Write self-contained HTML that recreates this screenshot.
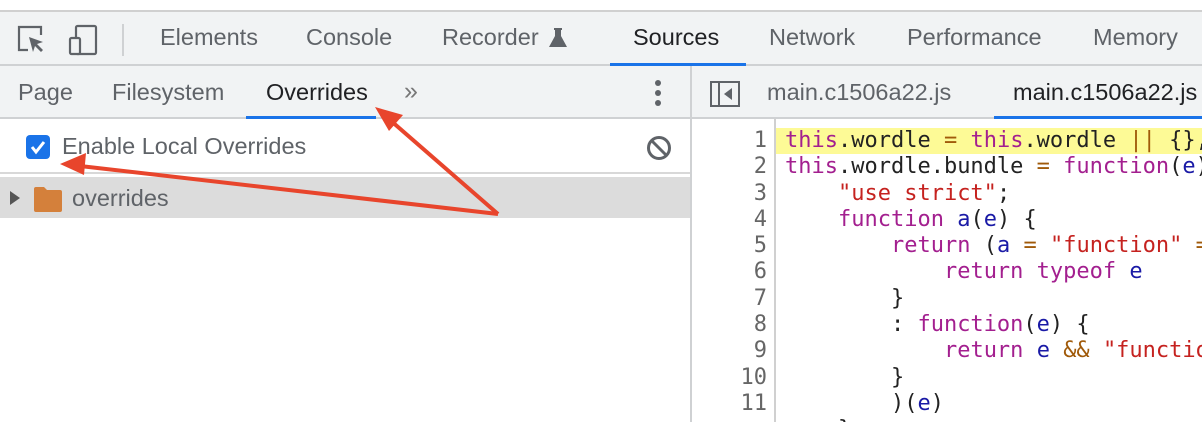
<!DOCTYPE html>
<html><head><style>
*{margin:0;padding:0;box-sizing:border-box}
html,body{width:1202px;height:422px;overflow:hidden}
body{background:#fff;font-family:"Liberation Sans",sans-serif;position:relative}
.a{position:absolute}
.t{position:absolute;font-size:23.5px;color:#5f6368;white-space:nowrap}
.code{position:absolute;left:785px;top:128px;height:294px;overflow:hidden;font-family:"DejaVu Sans Mono",monospace;font-size:22px;line-height:26.3px;white-space:pre;color:#222}
.ln{position:absolute;left:700px;width:67px;top:128px;text-align:right;font-family:"DejaVu Sans Mono",monospace;font-size:22px;line-height:26.3px;color:#666;white-space:pre}
.k{color:#a31f8f}.s{color:#c5221f}.v{color:#1a1aa6}.o{color:#a05a0a}
</style></head><body>
<div class="a" style="left:0;top:10px;width:1202px;height:2px;background:#d0d0d0"></div>
<div class="a" style="left:0;top:12px;width:1202px;height:106px;background:#f1f3f4"></div>
<div class="a" style="left:0;top:64px;width:1202px;height:2px;background:#cfd1d3"></div>
<div class="a" style="left:0;top:117px;width:1202px;height:2px;background:#cfd1d3"></div>
<div class="a" style="left:690px;top:66px;width:2px;height:356px;background:#cfd1d3"></div>
<svg class="a" style="left:16px;top:24px" width="32" height="32" viewBox="0 0 32 32"><path d="M12 26H3V3h22v8" fill="none" stroke="#5f6368" stroke-width="2.2"/><path d="M13 13l14 5-6 2 6 6-2 2-6-6-2 6z" fill="#5f6368"/></svg>
<svg class="a" style="left:68px;top:24px" width="34" height="32" viewBox="0 0 34 32"><rect x="8" y="2" width="20" height="28" rx="1.5" fill="none" stroke="#5f6368" stroke-width="2.2"/><rect x="2" y="14" width="10" height="16" rx="1.5" fill="#f1f3f4" stroke="#5f6368" stroke-width="2.2"/></svg>
<div class="a" style="left:122px;top:24px;width:2px;height:32px;background:#cfd1d3"></div>
<div class="t" style="left:160px;top:24px">Elements</div>
<div class="t" style="left:306px;top:24px">Console</div>
<div class="t" style="left:442px;top:24px">Recorder</div>
<svg class="a" style="left:548px;top:27px" width="20" height="22" viewBox="0 0 20 22"><path d="M6 1h8v2h-1v6l6 11H1L7 9V3H6z" fill="#5f6368"/></svg>
<div class="t" style="left:633px;top:24px;color:#202124">Sources</div>
<div class="a" style="left:610px;top:63px;width:136px;height:3px;background:#1a73e8"></div>
<div class="t" style="left:769px;top:24px">Network</div>
<div class="t" style="left:907px;top:24px">Performance</div>
<div class="t" style="left:1093px;top:24px">Memory</div>
<div class="t" style="left:18px;top:79px">Page</div>
<div class="t" style="left:112px;top:79px">Filesystem</div>
<div class="t" style="left:266px;top:79px;color:#202124">Overrides</div>
<div class="t" style="left:404px;top:77px;font-size:25px;color:#777">»</div>
<div class="a" style="left:246px;top:116px;width:130px;height:3px;background:#1a73e8"></div>
<div class="a" style="left:655px;top:80px;width:6px;height:6px;border-radius:3px;background:#5f6368;box-shadow:0 10px 0 #5f6368,0 20px 0 #5f6368"></div>
<svg class="a" style="left:710px;top:81px" width="30" height="26" viewBox="0 0 30 26"><rect x="1" y="1" width="28" height="24" fill="none" stroke="#5f6368" stroke-width="2"/><path d="M9 1v24" stroke="#5f6368" stroke-width="2"/><path d="M22 7v12l-8-6z" fill="#5f6368"/></svg>
<div class="t" style="left:767px;top:79px">main.c1506a22.js</div>
<div class="t" style="left:1013px;top:79px;color:#202124">main.c1506a22.js</div>
<div class="a" style="left:994px;top:116px;width:208px;height:3px;background:#1a73e8"></div>
<div class="a" style="left:26px;top:135px;width:24px;height:24px;border-radius:4px;background:#1a73e8"></div>
<svg class="a" style="left:26px;top:135px" width="24" height="24" viewBox="0 0 24 24"><path d="M6 12l4 5 8-10" fill="none" stroke="#fff" stroke-width="3"/></svg>
<div class="t" style="left:62px;top:133px">Enable Local Overrides</div>
<svg class="a" style="left:645px;top:134px" width="28" height="28" viewBox="0 0 28 28"><circle cx="14" cy="14" r="10.5" fill="none" stroke="#5f6368" stroke-width="3"/><path d="M7 7l14 14" stroke="#5f6368" stroke-width="3"/></svg>
<div class="a" style="left:0;top:172px;width:690px;height:2px;background:#d8d8d8"></div>
<div class="a" style="left:0;top:177px;width:690px;height:41px;background:#dcdcdc"></div>
<svg class="a" style="left:9px;top:190px" width="12" height="16"><path d="M1 1l10 7-10 7z" fill="#555"/></svg>
<svg class="a" style="left:33px;top:186px" width="30" height="26" viewBox="0 0 30 26"><path d="M1 3q0-2 2-2h8l3 3h13q2 0 2 2v18q0 2-2 2H3q-2 0-2-2z" fill="#d4803b"/></svg>
<div class="t" style="left:72px;top:185px">overrides</div>
<div class="a" style="left:774px;top:119px;width:2px;height:303px;background:#d0d0d0"></div>
<div class="a" style="left:776px;top:128px;width:426px;height:26px;background:#fdfa96"></div>
<div class="ln">1
2
3
4
5
6
7
8
9
10
11</div>
<div class="code"><span class="k">this</span>.wordle <span class="o">=</span> <span class="k">this</span>.wordle <span class="o">||</span> {},
<span class="k">this</span>.wordle.bundle <span class="o">=</span> <span class="k">function</span>(<span class="v">e</span>)
    <span class="s">"use strict"</span>;
    <span class="k">function</span> <span class="v">a</span>(<span class="v">e</span>) {
        <span class="k">return</span> (<span class="v">a</span> <span class="o">=</span> <span class="s">"function"</span> <span class="o">=</span>
            <span class="k">return typeof</span> <span class="v">e</span>
        }
        : <span class="k">function</span>(<span class="v">e</span>) {
            <span class="k">return</span> <span class="v">e</span> <span class="o">&amp;&amp;</span> <span class="s">"function</span>
        }
        )(<span class="v">e</span>)
    }</div>
<svg class="a" style="left:0;top:0" width="1202" height="422"><g stroke="#e8452c" stroke-width="4" fill="#e8452c"><line x1="498" y1="214" x2="390" y2="120"/><path d="M375 107l28 8-14 16z" stroke="none"/><line x1="498" y1="214" x2="80" y2="166"/><path d="M60 164l26-11-2 22z" stroke="none"/></g></svg>
</body></html>
